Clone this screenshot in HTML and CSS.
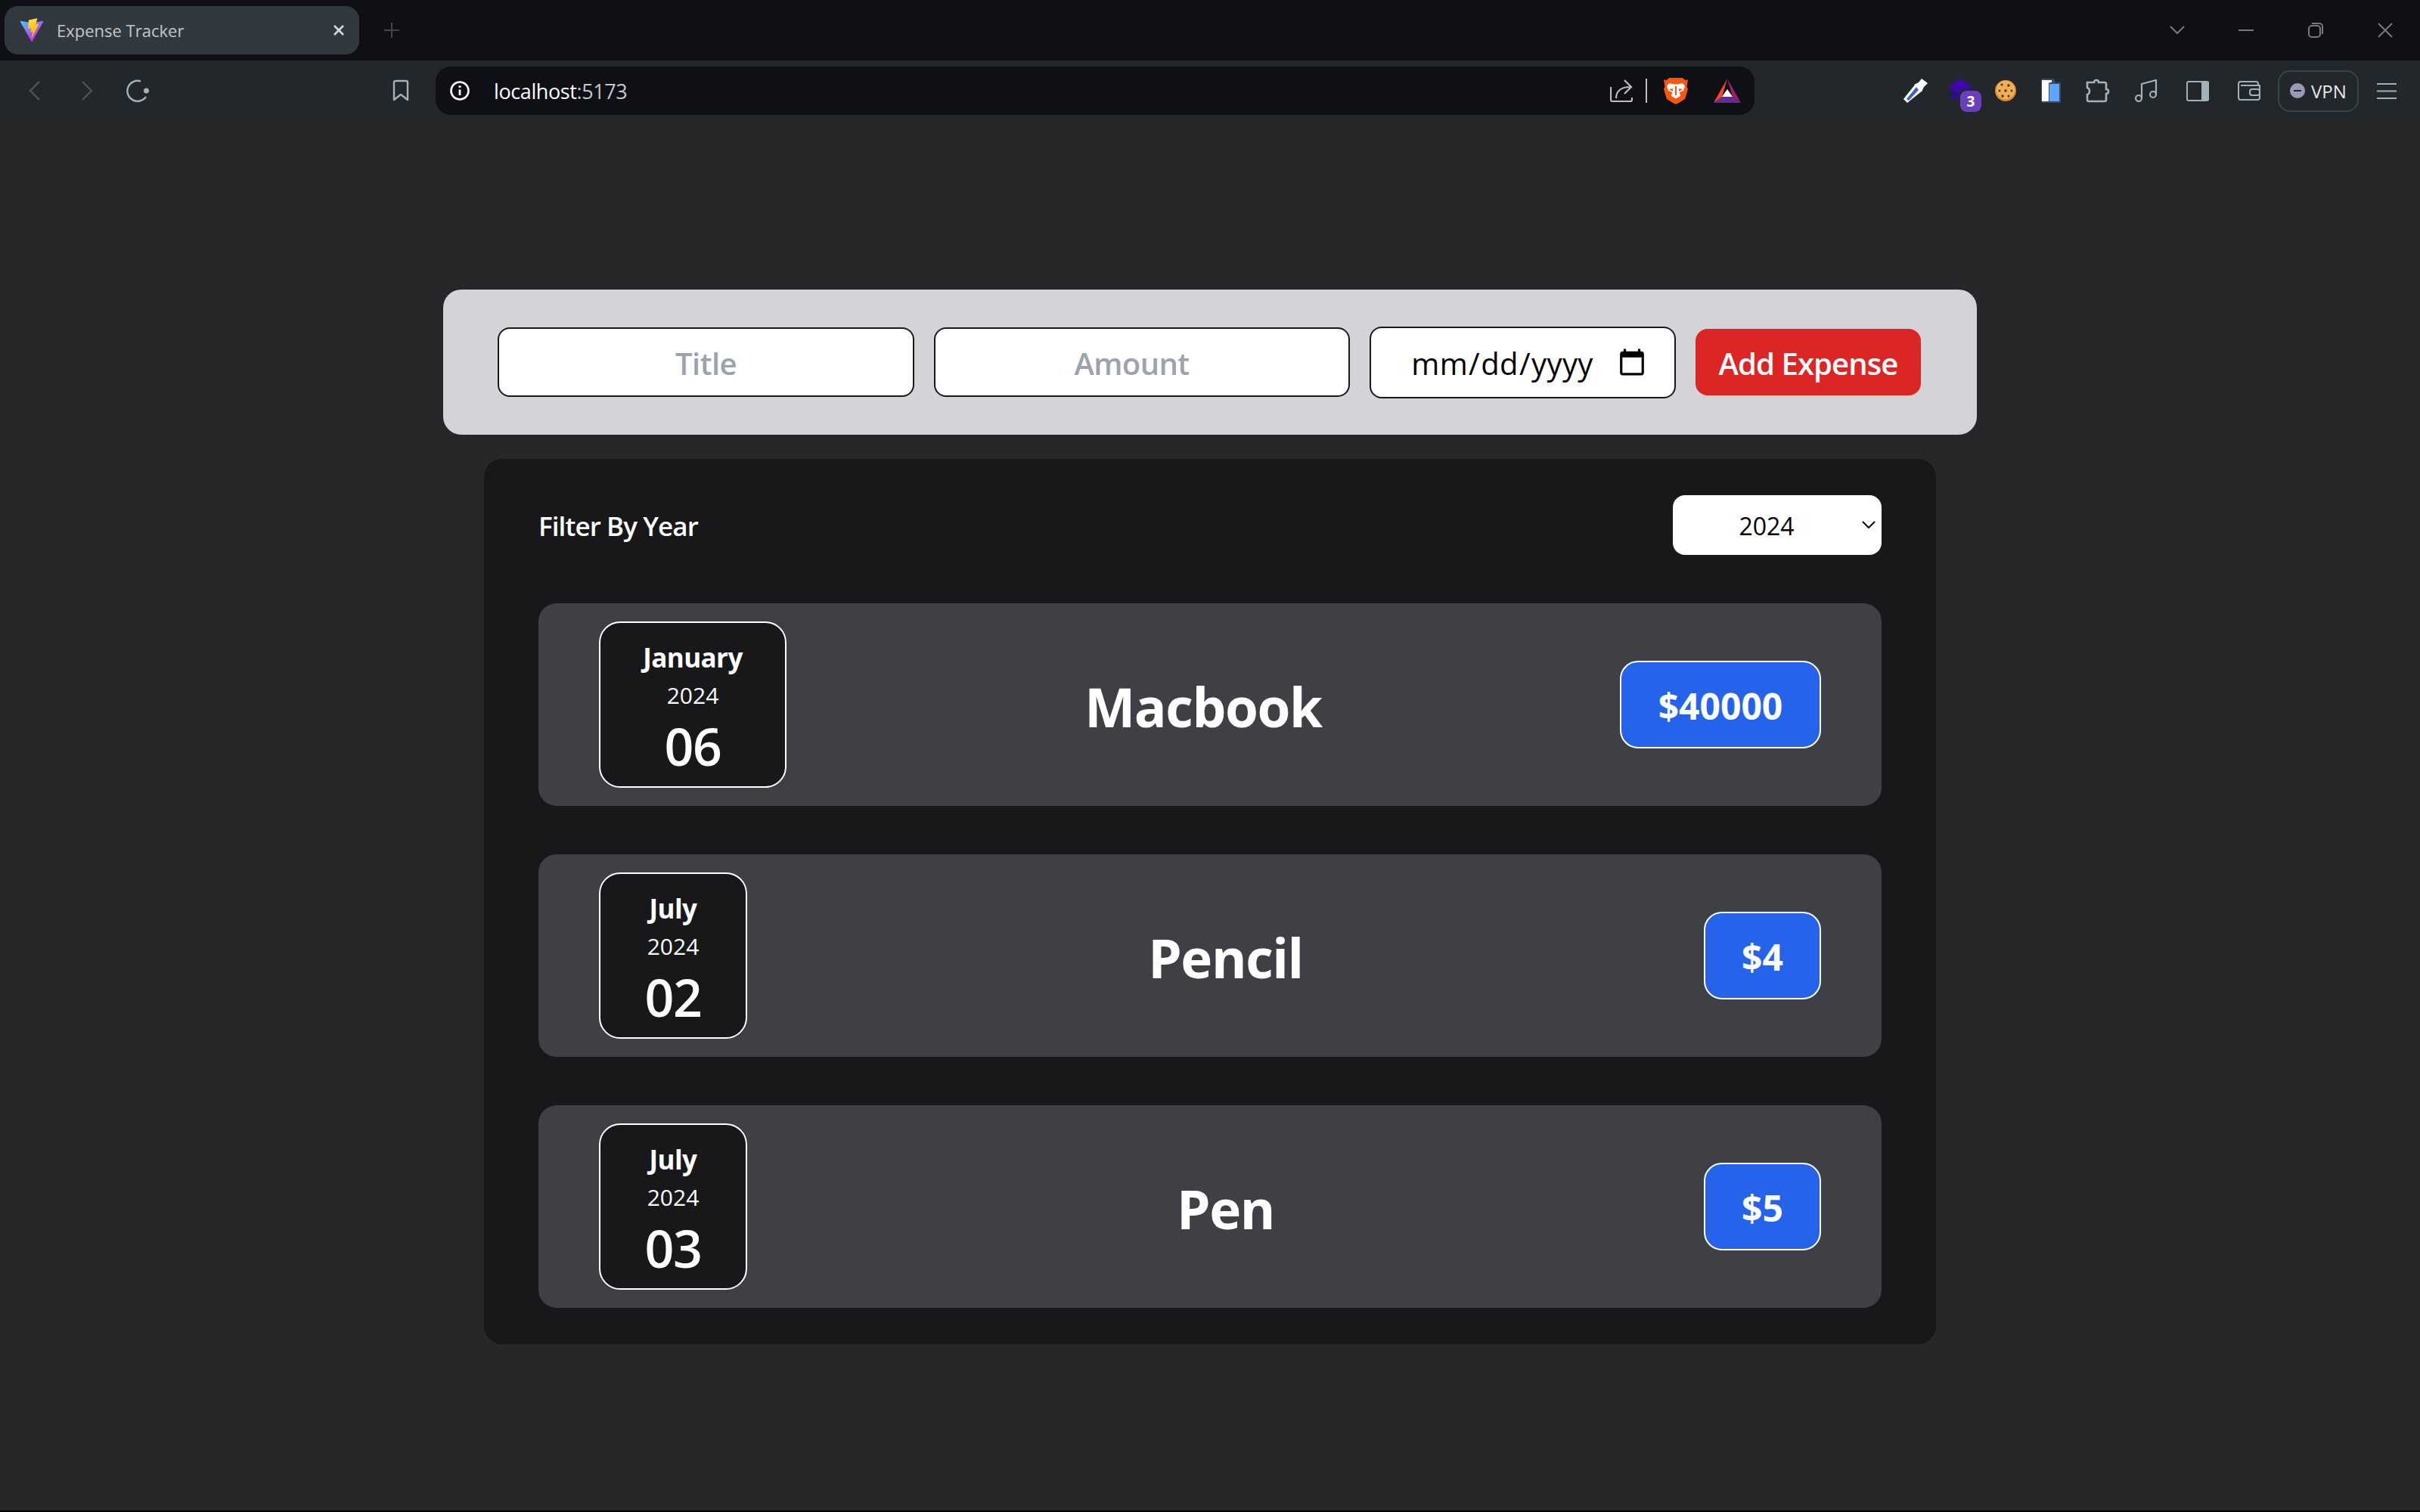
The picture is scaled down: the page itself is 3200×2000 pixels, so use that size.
FILE: index.html
```html
<!DOCTYPE html>
<html lang="en">
<head>
    <meta charset="UTF-8">
    <title>Expense Tracker</title>
    <link rel="stylesheet" href="styles.css">
</head>
<body>
    <div class="window">

        <!-- tab strip -->
        <div class="tabstrip">
            <div class="tab">
                <svg class="tab-logo" viewBox="0 0 410 404" width="32" height="32">
                    <defs>
                        <linearGradient id="viteA" x1="6" y1="33" x2="235" y2="344" gradientUnits="userSpaceOnUse">
                            <stop offset="0" stop-color="#41d1ff"/>
                            <stop offset="1" stop-color="#bd34fe"/>
                        </linearGradient>
                        <linearGradient id="viteB" x1="194" y1="8" x2="236" y2="292" gradientUnits="userSpaceOnUse">
                            <stop offset="0" stop-color="#ffea83"/>
                            <stop offset="0.08" stop-color="#ffdd35"/>
                            <stop offset="1" stop-color="#ffa800"/>
                        </linearGradient>
                    </defs>
                    <path fill="url(#viteA)" d="M399.641 59.525L215.643 388.545c-3.799 6.793-13.559 6.833-17.415.073L10.582 59.556c-4.201-7.366 2.099-16.288 10.447-14.796l184.195 32.923c1.175.21 2.378.208 3.553-.006l180.343-32.87c8.32-1.517 14.649 7.335 10.521 14.718z"/>
                    <path fill="url(#viteB)" d="M292.965 1.574L156.801 28.255a5 5 0 00-4.03 4.611l-8.376 141.464c-.197 3.332 2.863 5.918 6.115 5.168l37.91-8.749c3.547-.818 6.752 2.306 6.023 5.873l-11.263 55.153c-.758 3.712 2.727 6.886 6.352 5.785l23.415-7.114c3.63-1.102 7.118 2.081 6.35 5.796l-17.899 86.633c-1.12 5.419 6.088 8.374 9.094 3.728l2.008-3.103 110.954-221.428c1.858-3.707-1.346-7.935-5.418-7.15l-39.022 7.532c-3.667.707-6.787-2.708-5.752-6.296l25.469-88.291c1.036-3.594-2.095-7.012-5.766-6.293z"/>
                </svg>
                <span class="tab-title">Expense Tracker</span>
                <svg class="tab-close" viewBox="0 0 16 16" width="16" height="16"><path d="M2 2l12 12M14 2L2 14" stroke="#d5d8da" stroke-width="2.6" fill="none"/></svg>
            </div>
            <svg class="new-tab" viewBox="0 0 22 22" width="22" height="22"><path d="M11 1v20M1 11h20" stroke="#40464b" stroke-width="2" fill="none"/></svg>
            <div class="window-controls">
                <svg viewBox="0 0 20 12" width="20" height="12"><path d="M1 1l9 9 9-9" stroke="#77797c" stroke-width="2" fill="none"/></svg>
                <svg class="win-min" viewBox="0 0 20 2" width="20" height="2"><path d="M0 1h20" stroke="#77797c" stroke-width="2"/></svg>
                <svg class="win-restore" viewBox="0 0 20 20" width="20" height="20"><rect x="1" y="4" width="15" height="15" rx="4" stroke="#77797c" stroke-width="2" fill="none"/><path d="M5 1h10a4 4 0 014 4v10" stroke="#77797c" stroke-width="2" fill="none"/></svg>
                <svg class="win-close" viewBox="0 0 20 20" width="20" height="20"><path d="M1 1l18 18M19 1L1 19" stroke="#77797c" stroke-width="2" fill="none"/></svg>
            </div>
        </div>

        <!-- toolbar -->
        <div class="toolbar">
            <svg class="nav-back" viewBox="0 0 16 26" width="16" height="26"><path d="M14 1L2 13l12 12" stroke="#4b5358" stroke-width="2.4" fill="none"/></svg>
            <svg class="nav-forward" viewBox="0 0 16 26" width="16" height="26"><path d="M2 1l12 12L2 25" stroke="#4b5358" stroke-width="2.4" fill="none"/></svg>
            <svg class="nav-reload" viewBox="0 0 30 30" width="30" height="30"><path d="M19 2.500A13.500 13.500 0 1 0 26 23" stroke="#a3b1b8" stroke-width="2.400" fill="none"/><circle cx="26.500" cy="15" r="3.500" fill="#a3b1b8"/></svg>
            <svg class="nav-bookmark" viewBox="0 0 22 30" width="22" height="30"><path d="M2 27V4a2 2 0 012-2h14a2 2 0 012 2v23l-9-7z" stroke="#a3b1b8" stroke-width="2.4" fill="none" stroke-linejoin="round"/></svg>

            <div class="omnibox">
                <svg viewBox="0 0 26 26" width="26" height="26"><circle cx="13" cy="13" r="11.5" stroke="#fff" stroke-width="2.6" fill="none"/><path d="M13 11.5V19" stroke="#fff" stroke-width="2.8"/><circle cx="13" cy="7.6" r="1.7" fill="#fff"/></svg>
                <span class="url">localhost<span class="url-port">:5173</span></span>
                <div class="omnibox-actions">
                    <svg viewBox="0 0 30 30" width="30" height="30"><path d="M1 10v17a2 2 0 002 2h24a2 2 0 002-2v-3" stroke="#bcbebf" stroke-width="2.2" fill="none"/><path d="M8 25c0-9 6-15 19-15M19 1l9 9-9 9" stroke="#bcbebf" stroke-width="2.2" fill="none"/></svg>
                    <span class="omnibox-divider"></span>
                    <svg class="brave" viewBox="0 0 32 36" width="32" height="36">
                        <path d="M7 1h18l3 3 4-.5-1.500 9L32 16l-4 13-8 5-4 2-4-2-8-5-4-13 1.500-3.500-1.500-9L4 4z" fill="#f9560e"/>
                        <path d="M7 8l7 1.500h4L25 8l3 4-2 6-5 2 1 5-6 3.500L10 25l1-5-5-2-2-6z" fill="#fff"/>
                        <path d="M12 15l-5 1 5 3zM20 15l5 1-5 3zM15 12h2v12h-2z" fill="#f9560e"/>
                    </svg>
                    <svg class="bat" viewBox="0 0 36 32" width="36" height="32">
                        <path d="M18 0L0 32l11-8z" fill="#ff4724"/>
                        <path d="M18 0l18 32-11-8z" fill="#9e1f63"/>
                        <path d="M0 32h36l-11-8H11z" fill="#662d91"/>
                        <path d="M18 14l-7 10h14z" fill="#fff"/>
                    </svg>
                </div>
            </div>

            <div class="extensions">
                <svg class="ext-dropper" viewBox="0 0 32 32" width="32" height="32"><path d="M5 32L0 27 16 7l9 9z" fill="#fff"/><path d="M4 27l13-16 3 4L7 29z" fill="#3a63c9"/><path d="M14 8l6-3 4-5 8 6-5 5-3 6z" fill="#fff"/></svg>
                <div class="ext-stack">
                    <svg viewBox="0 0 32 32" width="32" height="32"><path d="M16 12l16 10-16 10L0 22z" fill="#2c0d86"/><path d="M16 0l16 11-16 11L0 11z" fill="#3e08ad"/></svg>
                    <span class="ext-badge">3</span>
                </div>
                <svg class="ext-cookie" viewBox="0 0 28 28" width="28" height="28"><circle cx="14" cy="14" r="14" fill="#d9862a"/><circle cx="14" cy="13" r="12.500" fill="#edb055"/><g fill="#5a3015"><circle cx="9" cy="6" r="1.500"/><circle cx="18" cy="7" r="1.800"/><circle cx="6" cy="14" r="1.500"/><circle cx="14" cy="14" r="1.800"/><circle cx="22" cy="14" r="1.500"/><circle cx="10" cy="21" r="1.800"/><circle cx="18" cy="21" r="1.500"/></g></svg>
                <svg class="ext-phone" viewBox="0 0 26 32" width="26" height="32"><rect x="0" y="0" width="18" height="32" rx="2" fill="#3c4a63"/><rect x="1" y="2" width="13" height="28" fill="#fff"/><rect x="10" y="5" width="16" height="27" rx="2" fill="#3c4a63"/><rect x="11" y="7" width="13" height="23" rx="1" fill="#61a4ff"/></svg>
                <svg class="ext-puzzle" viewBox="0 0 32 32" width="32" height="32"><path d="M2 5h9c0-4 6-4 6 0h8a2 2 0 012 2v7c4 0 4 6 0 6v8a2 2 0 01-2 2H4a2 2 0 01-2-2v-7c4-1 4-8 0-9z" stroke="#a3b1b8" stroke-width="2.600" fill="none"/></svg>
                <svg class="ext-music" viewBox="0 0 30 30" width="30" height="30"><circle cx="5" cy="25" r="4" stroke="#a3b1b8" stroke-width="2.200" fill="none"/><circle cx="24" cy="20" r="4" stroke="#a3b1b8" stroke-width="2.200" fill="none"/><path d="M9 25V6l19-5v19" stroke="#a3b1b8" stroke-width="2.200" fill="none"/></svg>
                <svg class="ext-sidebar" viewBox="0 0 30 27" width="30" height="27"><rect x="1" y="1" width="28" height="25" rx="2" stroke="#a3b1b8" stroke-width="2" fill="none"/><rect x="20" y="1" width="10" height="25" rx="1" fill="#a3b1b8"/></svg>
                <svg class="ext-wallet" viewBox="0 0 30 26" width="30" height="26"><path d="M27 6V4a3 3 0 00-3-3H4a3 3 0 00-3 3v18a3 3 0 003 3h22a3 3 0 003-3V6H4" stroke="#a3b1b8" stroke-width="2" fill="none"/><rect x="16" y="11" width="13" height="8" rx="3" stroke="#a3b1b8" stroke-width="2" fill="#22272b"/></svg>
                <div class="vpn">
                    <svg viewBox="0 0 20 20" width="20" height="20"><circle cx="10" cy="10" r="10" fill="#9a9ab8"/><path d="M5 10h10" stroke="#22272b" stroke-width="2"/></svg>
                    <span>VPN</span>
                </div>
                <svg class="ext-menu" viewBox="0 0 26 21" width="26" height="21"><path d="M0 1h26M0 10.500h26M0 20h26" stroke="#a3b1b8" stroke-width="2.200"/></svg>
            </div>
        </div>

        <!-- la pagina -->
        <div class="page">
            <form class="expense-form">
                <input class="field field-title" type="text" placeholder="Title">
                <input class="field field-amount" type="number" placeholder="Amount">
                <input class="field field-date" type="date">
                <button class="add-btn" type="button">Add Expense</button>
            </form>

            <div class="expenses">
                <div class="filter">
                    <label class="filter-label">Filter By Year</label>
                    <div class="select-wrap">
                        <select class="year-select">
                            <option>2024</option>
                            <option>2023</option>
                            <option>2022</option>
                        </select>
                        <svg class="select-arrow" viewBox="0 0 18 10" width="18" height="10"><path d="M1 1l8 8 8-8" stroke="#000" stroke-width="2" fill="none"/></svg>
                    </div>
                </div>

                <div class="expense-list">
                    <div class="expense">
                        <div class="date-box date-long">
                            <div class="date-month">January</div>
                            <div class="date-year">2024</div>
                            <div class="date-day">06</div>
                        </div>
                        <h2 class="expense-title">Macbook</h2>
                        <div class="price price-long">$40000</div>
                    </div>
                    <div class="expense">
                        <div class="date-box">
                            <div class="date-month">July</div>
                            <div class="date-year">2024</div>
                            <div class="date-day">02</div>
                        </div>
                        <h2 class="expense-title">Pencil</h2>
                        <div class="price">$4</div>
                    </div>
                    <div class="expense">
                        <div class="date-box">
                            <div class="date-month">July</div>
                            <div class="date-year">2024</div>
                            <div class="date-day">03</div>
                        </div>
                        <h2 class="expense-title">Pen</h2>
                        <div class="price">$5</div>
                    </div>
                </div>
            </div>
        </div>
    </div>
</body>
</html>
```

FILE: styles.css
```css
* {
    margin: 0;
    padding: 0;
    box-sizing: border-box;
}

body {
    font-family: "Open Sans", "Noto Sans", sans-serif;
    background-color: #000;
}

.window {
    width: 3200px;
    height: 1998px;
    background-color: #272729;
    display: flex;
    flex-direction: column;
}

/* barra de abas */
.tabstrip {
    height: 80px;
    flex: none;
    background-color: #0e1015;
    display: flex;
    align-items: center;
    padding-left: 6px;
}

.tab {
    width: 469px;
    height: 64px;
    background-color: #32393e;
    border-radius: 18px;
    display: flex;
    align-items: center;
    padding-left: 20px;
}

.tab-title {
    color: #c4c8ca;
    font-size: 22px;
    margin-left: 17px;
}

.tab-close {
    margin-left: auto;
    margin-right: 19px;
}

.new-tab {
    margin-left: 32px;
}

.window-controls {
    margin-left: auto;
    display: flex;
    align-items: center;
    padding-right: 36px;
}

.win-min {
    margin-left: 71px;
}

.win-restore {
    margin-left: 72px;
}

.win-close {
    margin-left: 72px;
}

/* barra de ferramentas */
.toolbar {
    height: 80px;
    flex: none;
    background-color: #22272b;
    display: flex;
    align-items: center;
    padding-left: 38px;
}

.nav-forward {
    margin-left: 53px;
}

.nav-reload {
    margin-left: 44px;
}

.nav-bookmark {
    margin-left: 322px;
}

.omnibox {
    width: 1744px;
    height: 64px;
    margin-left: 35px;
    background-color: #0e1015;
    border-radius: 20px;
    display: flex;
    align-items: center;
    padding: 0 18px 0 19px;
}

.url {
    color: #fff;
    font-size: 27px;
    margin-left: 32px;
    letter-spacing: -0.4px;
}

.url-port {
    color: #c4c8ca;
}

.omnibox-actions {
    margin-left: auto;
    display: flex;
    align-items: center;
}

.omnibox-divider {
    width: 2px;
    height: 32px;
    background-color: #bcbebf;
    margin-left: 17px;
}

.brave {
    margin-left: 22px;
}

.bat {
    margin-left: 34px;
}

.extensions {
    display: flex;
    align-items: center;
    margin-left: 197px;
}

.ext-stack {
    position: relative;
    width: 32px;
    height: 32px;
    margin-left: 27px;
}

.ext-badge {
    position: absolute;
    left: 16px;
    top: 16px;
    width: 28px;
    height: 28px;
    background-color: #6a3fbc;
    border-radius: 8px;
    outline: 3px solid #22272b;
    color: #fff;
    font-size: 19px;
    font-weight: 700;
    line-height: 28px;
    text-align: center;
}

.ext-cookie {
    margin-left: 30px;
}

.ext-phone {
    margin-left: 33px;
}

.ext-puzzle {
    margin-left: 33px;
}

.ext-music {
    margin-left: 33px;
}

.ext-sidebar {
    margin-left: 38px;
}

.ext-wallet {
    margin-left: 38px;
}

.vpn {
    width: 107px;
    height: 55px;
    margin-left: 23px;
    border: 2px solid #39454a;
    border-radius: 16px;
    display: flex;
    align-items: center;
    padding-left: 14px;
    color: #e6e8e9;
    font-size: 24px;
}

.vpn span {
    margin-left: 8px;
}

.ext-menu {
    margin-left: 24px;
}

/* pagina */
.page {
    flex: 1;
    display: flex;
    flex-direction: column;
    align-items: center;
    padding-top: 223px;
}

.expense-form {
    width: 2028px;
    height: 192px;
    background-color: #d4d4d8;
    border-radius: 24px;
    display: flex;
    align-items: center;
    gap: 26px;
    padding: 0 74px 0 72px;
}

.field {
    height: 92px;
    padding-top: 2px;
    background-color: #fff;
    border: 2px solid #18181b;
    border-radius: 16px;
    font-family: inherit;
    font-size: 40px;
    text-align: center;
    color: #000;
}

.field::placeholder {
    color: #9ca3af;
    font-weight: 600;
    letter-spacing: -0.6px;
}

.field-title {
    width: 551px;
}

.field-amount {
    width: 550px;
    padding-right: 12px;
}

.field-date {
    width: 405px;
    height: 95px;
    padding: 2px 34px 0 24px;
    letter-spacing: 0.4px;
}

.add-btn {
    width: 298px;
    height: 88px;
    padding-top: 2px;
    background-color: #dc2626;
    color: #fff;
    border: none;
    border-radius: 16px;
    font-family: inherit;
    font-size: 40px;
    font-weight: 600;
    letter-spacing: -0.9px;
}

.expenses {
    width: 1920px;
    margin-top: 32px;
    background-color: #18181b;
    border-radius: 24px;
    padding: 48px 72px;
}

.filter {
    display: flex;
    align-items: center;
    justify-content: space-between;
    margin-bottom: 64px;
}

.filter-label {
    color: #fff;
    font-size: 35px;
    font-weight: 600;
    letter-spacing: -0.9px;
    padding-top: 2px;
}

.select-wrap {
    position: relative;
}

.year-select {
    display: block;
    width: 276px;
    height: 79px;
    background-color: #fff;
    border: none;
    border-radius: 16px;
    appearance: none;
    font-family: inherit;
    font-size: 32px;
    text-align: center;
    padding: 2px 28px 0 0;
    color: #000;
}

.select-arrow {
    position: absolute;
    right: 8px;
    top: 34px;
}

.expense-list {
    display: flex;
    flex-direction: column;
    gap: 64px;
}

.expense {
    height: 268px;
    background-color: #3f3f46;
    border-radius: 24px;
    display: flex;
    align-items: center;
    justify-content: space-between;
    padding: 0 80px;
}

.date-box {
    width: 196px;
    height: 220px;
    background-color: #18181b;
    border: 2px solid #fff;
    border-radius: 28px;
    color: #fff;
    display: flex;
    flex-direction: column;
    align-items: center;
}

.date-long {
    width: 248px;
}

.date-month {
    font-size: 35px;
    font-weight: 700;
    line-height: 44px;
    margin-top: 24px;
    letter-spacing: -0.6px;
}

.date-year {
    font-size: 30px;
    line-height: 40px;
    margin-top: 8px;
}

.date-day {
    font-size: 68px;
    font-weight: 600;
    line-height: 80px;
    margin-top: 7px;
    letter-spacing: -1.5px;
}

.expense-title {
    color: #fff;
    font-size: 71px;
    font-weight: 700;
    letter-spacing: -1.4px;
    padding-top: 4px;
}

.price {
    width: 155px;
    height: 116px;
    padding-top: 2px;
    background-color: #2563eb;
    border: 2px solid #fff;
    border-radius: 24px;
    color: #fff;
    font-size: 48px;
    font-weight: 700;
    display: flex;
    align-items: center;
    justify-content: center;
}

.price-long {
    width: 266px;
}
```
